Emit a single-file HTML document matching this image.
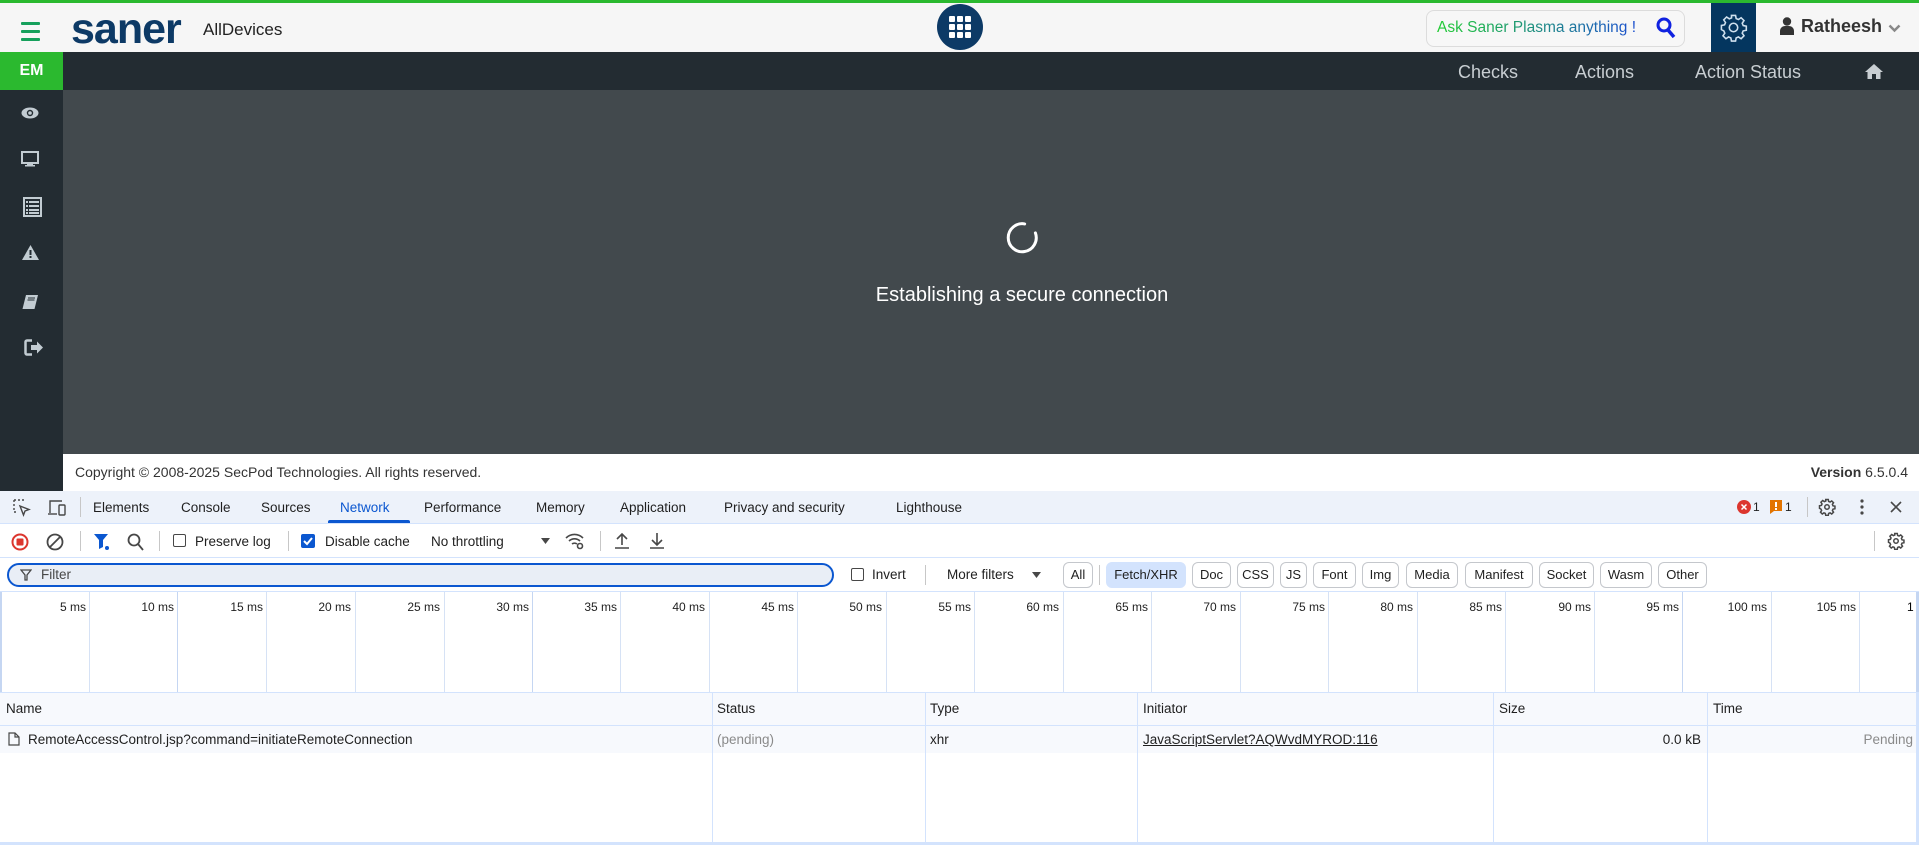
<!DOCTYPE html>
<html><head><meta charset="utf-8"><style>
*{box-sizing:border-box;margin:0;padding:0}
body{width:1919px;height:845px;overflow:hidden;font-family:"Liberation Sans",Arial,sans-serif;background:#fff;position:relative}
.a{position:absolute}
.dt{font-family:"Liberation Sans",Arial,sans-serif;font-size:13.5px;color:#1f1f1f}
.chip{position:absolute;top:562px;height:26px;border:1px solid #c4c7cc;border-radius:6px;font-size:13px;line-height:24px;text-align:center;color:#1f1f1f}
.tick{position:absolute;top:592px;height:100px;border-left:1px solid #d6e2f5}
.tl{position:absolute;top:600px;font-size:12px;color:#1f1f1f;text-align:right;width:80px}
</style></head><body>
<div class="a" style="left:0;top:0;width:1919px;height:3px;background:#2bb92f"></div>
<div class="a" style="left:0;top:3px;width:1919px;height:49px;background:#f6f6f6"></div>
<div class="a" style="left:21px;top:22px;width:19px;height:3px;background:#16a05c;border-radius:1px"></div>
<div class="a" style="left:21px;top:30px;width:19px;height:3px;background:#16a05c;border-radius:1px"></div>
<div class="a" style="left:21px;top:38px;width:19px;height:3px;background:#16a05c;border-radius:1px"></div>
<div class="a" style="left:71px;top:3px;font-size:43px;font-weight:bold;color:#0d3a66;letter-spacing:-1px;line-height:52px">saner</div>
<div class="a" style="left:203px;top:20px;font-size:17px;color:#222">AllDevices</div>
<div class="a" style="left:937px;top:4px;width:46px;height:46px;border-radius:50%;background:#0d3a66"></div>
<svg class="a" style="left:949px;top:16px" width="22" height="22" viewBox="0 0 22 22" fill="#fff"><rect x="0" y="0" width="6" height="6" rx="1"/><rect x="8" y="0" width="6" height="6" rx="1"/><rect x="16" y="0" width="6" height="6" rx="1"/><rect x="0" y="8" width="6" height="6" rx="1"/><rect x="8" y="8" width="6" height="6" rx="1"/><rect x="16" y="8" width="6" height="6" rx="1"/><rect x="0" y="16" width="6" height="6" rx="1"/><rect x="8" y="16" width="6" height="6" rx="1"/><rect x="16" y="16" width="6" height="6" rx="1"/></svg>
<div class="a" style="left:1426px;top:10px;width:259px;height:37px;border:1px solid #dcdcdc;border-radius:8px;background:#f7f7f7"></div>
<div class="a" style="left:1437px;top:19px;font-size:15.5px;white-space:nowrap;background:linear-gradient(90deg,#22cc33,#1b4fd0);-webkit-background-clip:text;background-clip:text;color:transparent">Ask Saner Plasma anything !</div>
<svg class="a" style="left:1656px;top:17px" width="20" height="22" viewBox="0 0 20 22"><circle cx="8" cy="8" r="6" fill="none" stroke="#1022e0" stroke-width="3"/><line x1="12" y1="13" x2="18" y2="20" stroke="#1022e0" stroke-width="3.5"/></svg>
<div class="a" style="left:1711px;top:3px;width:45px;height:49px;background:#04365f"></div>
<svg class="a" style="left:1719px;top:13px" width="29" height="29" viewBox="0 0 24 24" fill="none" stroke="#cfe0ee" stroke-width="1.3"><circle cx="12" cy="12" r="3.5"/><path d="M10.3 2h3.4l.5 2.6 1.9.8 2.2-1.5 2.4 2.4-1.5 2.2.8 1.9 2.6.5v3.4l-2.6.5-.8 1.9 1.5 2.2-2.4 2.4-2.2-1.5-1.9.8-.5 2.6h-3.4l-.5-2.6-1.9-.8-2.2 1.5-2.4-2.4 1.5-2.2-.8-1.9L2 13.7v-3.4l2.6-.5.8-1.9-1.5-2.2 2.4-2.4 2.2 1.5 1.9-.8z"/></svg>
<svg class="a" style="left:1780px;top:17px" width="14" height="18" viewBox="0 0 14 18" fill="#333"><circle cx="7" cy="4.5" r="4.2"/><path d="M0 18v-4c0-3 2.5-5 5-5h4c2.5 0 5 2 5 5v4z"/></svg>
<div class="a" style="left:1801px;top:16px;font-size:18px;font-weight:bold;color:#333">Ratheesh</div>
<svg class="a" style="left:1888px;top:24px" width="13" height="9" viewBox="0 0 13 9"><path d="M1.5 1.5l5 5 5-5" stroke="#888" stroke-width="2.5" fill="none"/></svg>
<div class="a" style="left:0;top:52px;width:1919px;height:38px;background:#232c32"></div>
<div class="a" style="left:0;top:90px;width:63px;height:401px;background:#232c32"></div>
<div class="a" style="left:0;top:52px;width:63px;height:38px;background:#2bb92f;color:#fff;font-weight:bold;font-size:16px;text-align:center;line-height:38px">EM</div>
<div class="a" style="left:1458px;top:62px;font-size:18px;color:#c8ced2">Checks</div>
<div class="a" style="left:1575px;top:62px;font-size:18px;color:#c8ced2">Actions</div>
<div class="a" style="left:1695px;top:62px;font-size:18px;color:#c8ced2">Action Status</div>
<svg class="a" style="left:1865px;top:64px" width="18" height="15" viewBox="0 0 18 15" fill="#c8ced2"><path d="M9 0L0 8h2.5v7h4.5v-5h4v5h4.5V8H18z"/></svg>
<svg class="a" style="left:21px;top:107px" width="18" height="12" viewBox="0 0 18 12"><ellipse cx="9" cy="6" rx="8.5" ry="5.5" fill="#c2ccd2"/><circle cx="9" cy="6" r="3.2" fill="#232c32"/><circle cx="9" cy="6" r="1.8" fill="#c2ccd2"/></svg>
<svg class="a" style="left:21px;top:151px" width="18" height="16" viewBox="0 0 18 16"><rect x="1" y="1" width="16" height="11" fill="none" stroke="#c2ccd2" stroke-width="2"/><rect x="6" y="12" width="6" height="2" fill="#c2ccd2"/><rect x="4" y="14" width="10" height="1.5" fill="#c2ccd2"/></svg>
<svg class="a" style="left:23px;top:197px" width="19" height="20" viewBox="0 0 19 20" fill="#c2ccd2"><rect x="0" y="0" width="19" height="20"/><rect x="2" y="2" width="15" height="16" fill="#232c32"/><rect x="3" y="4" width="2" height="2"/><rect x="6" y="4" width="10" height="2"/><rect x="3" y="8" width="2" height="2"/><rect x="6" y="8" width="10" height="2"/><rect x="3" y="12" width="2" height="2"/><rect x="6" y="12" width="10" height="2"/><rect x="3" y="15" width="2" height="2"/><rect x="6" y="15" width="10" height="2"/></svg>
<svg class="a" style="left:22px;top:245px" width="17" height="15" viewBox="0 0 17 15"><path d="M8.5 0L17 15H0z" fill="#c2ccd2"/><rect x="7.5" y="5" width="2" height="5" fill="#232c32"/><rect x="7.5" y="11" width="2" height="2" fill="#232c32"/></svg>
<svg class="a" style="left:22px;top:295px" width="16" height="15" viewBox="0 0 16 15"><path d="M4 0h12l-3 12H1z" fill="#c2ccd2"/><path d="M1 12h12l-.5 2H.5z" fill="#c2ccd2"/><path d="M6 3h7M5.5 5h7" stroke="#232c32"/></svg>
<svg class="a" style="left:24px;top:339px" width="20" height="17" viewBox="0 0 20 17"><path d="M8 1.5H3a1.5 1.5 0 0 0-1.5 1.5v11A1.5 1.5 0 0 0 3 15.5h5" stroke="#c2ccd2" stroke-width="2.5" fill="none"/><path d="M7 6h6V2.5l6 6-6 6V11H7z" fill="#c2ccd2"/></svg>
<div class="a" style="left:63px;top:90px;width:1856px;height:364px;background:#42494d"></div>
<svg class="a" style="left:1004px;top:220px" width="36" height="36" viewBox="0 0 36 36"><path d="M25 5.5A14 14 0 1 1 11 5.5" stroke="#fff" stroke-width="3" fill="none" stroke-linecap="round" transform="rotate(40 18 18)"/></svg>
<div class="a" style="left:0;top:284px;width:1918px;text-align:center;font-size:20px;color:#fff;padding-left:126px">Establishing a secure connection</div>
<div class="a" style="left:63px;top:454px;width:1856px;height:37px;background:#fff"></div>
<div class="a" style="left:75px;top:464px;font-size:14px;color:#333">Copyright © 2008-2025 SecPod Technologies. All rights reserved.</div>
<div class="a" style="right:11px;top:464px;font-size:14px;color:#333"><b>Version</b> 6.5.0.4</div>
<div class="a" style="left:0;top:491px;width:1919px;height:33px;background:#edf2fa;border-bottom:1px solid #d3e3fd"></div>
<svg class="a" style="left:13px;top:499px" width="18" height="18" viewBox="0 0 18 18" fill="none" stroke="#474747" stroke-width="1.4"><path d="M1 1h2M5 1h2M9 1h2M1 1v2M1 5v2M1 9v2M1 13h2" /><path d="M7 7l9 3.5-4 1.5-1.5 4z"/></svg>
<svg class="a" style="left:47px;top:499px" width="20" height="18" viewBox="0 0 20 18" fill="none" stroke="#474747" stroke-width="1.4"><path d="M3 14V2h12"/><path d="M1 15h9"/><rect x="12" y="6" width="6" height="10" rx="1"/></svg>
<div class="a" style="left:80px;top:497px;width:1px;height:20px;background:#c7c7c7"></div>
<div class="a dt" style="left:93px;top:500px">Elements</div>
<div class="a dt" style="left:181px;top:500px">Console</div>
<div class="a dt" style="left:261px;top:500px">Sources</div>
<div class="a dt" style="left:340px;top:500px;color:#0b57d0">Network</div>
<div class="a" style="left:328px;top:520px;width:82px;height:3px;background:#0b57d0;border-radius:2px 2px 0 0"></div>
<div class="a dt" style="left:424px;top:500px">Performance</div>
<div class="a dt" style="left:536px;top:500px">Memory</div>
<div class="a dt" style="left:620px;top:500px">Application</div>
<div class="a dt" style="left:724px;top:500px">Privacy and security</div>
<div class="a dt" style="left:896px;top:500px">Lighthouse</div>
<svg class="a" style="left:1737px;top:500px" width="14" height="14"><circle cx="7" cy="7" r="7" fill="#dc362e"/><path d="M4.5 4.5l5 5M9.5 4.5l-5 5" stroke="#fff" stroke-width="1.5"/></svg>
<div class="a dt" style="left:1753px;top:500px;font-size:12px">1</div>
<svg class="a" style="left:1770px;top:500px" width="12" height="14"><path d="M0 0h12v11H4l-4 3z" fill="#e37400"/><rect x="5" y="2" width="2" height="5" fill="#fff"/><rect x="5" y="8" width="2" height="2" fill="#fff"/></svg>
<div class="a dt" style="left:1785px;top:500px;font-size:12px">1</div>
<div class="a" style="left:1807px;top:497px;width:1px;height:20px;background:#c7c7c7"></div>
<svg class="a" style="left:1818px;top:498px" width="18" height="18" viewBox="0 0 24 24" fill="none" stroke="#474747" stroke-width="2"><circle cx="12" cy="12" r="3"/><path d="M10.3 2h3.4l.5 2.6 1.9.8 2.2-1.5 2.4 2.4-1.5 2.2.8 1.9 2.6.5v3.4l-2.6.5-.8 1.9 1.5 2.2-2.4 2.4-2.2-1.5-1.9.8-.5 2.6h-3.4l-.5-2.6-1.9-.8-2.2 1.5-2.4-2.4 1.5-2.2-.8-1.9L2 13.7v-3.4l2.6-.5.8-1.9-1.5-2.2 2.4-2.4 2.2 1.5 1.9-.8z"/></svg>
<svg class="a" style="left:1859px;top:499px" width="6" height="16"><circle cx="3" cy="2" r="1.6" fill="#474747"/><circle cx="3" cy="8" r="1.6" fill="#474747"/><circle cx="3" cy="14" r="1.6" fill="#474747"/></svg>
<svg class="a" style="left:1890px;top:501px" width="12" height="12"><path d="M1 1l10 10M11 1L1 11" stroke="#474747" stroke-width="1.6"/></svg>
<div class="a" style="left:0;top:524px;width:1919px;height:34px;background:#fff;border-bottom:1px solid #d3e3fd"></div>
<svg class="a" style="left:11px;top:533px" width="18" height="18"><circle cx="9" cy="9" r="7.5" fill="none" stroke="#dc362e" stroke-width="2"/><rect x="5.5" y="5.5" width="7" height="7" rx="1" fill="#dc362e"/></svg>
<svg class="a" style="left:46px;top:533px" width="18" height="18" fill="none" stroke="#474747" stroke-width="1.8"><circle cx="9" cy="9" r="7.5"/><path d="M4 14L14 4"/></svg>
<div class="a" style="left:80px;top:531px;width:1px;height:20px;background:#c7c7c7"></div>
<svg class="a" style="left:94px;top:533px" width="16" height="18"><path d="M0 1h14l-5 6v7l-4 2V7z" fill="#0b57d0"/><circle cx="13" cy="15" r="2" fill="#0b57d0"/></svg>
<svg class="a" style="left:127px;top:533px" width="17" height="18" fill="none" stroke="#474747" stroke-width="1.8"><circle cx="7" cy="7" r="5.5"/><path d="M11 11l5 6"/></svg>
<div class="a" style="left:159px;top:531px;width:1px;height:20px;background:#c7c7c7"></div>
<div class="a" style="left:173px;top:534px;width:13px;height:13px;border:1px solid #474747;border-radius:2px"></div>
<div class="a dt" style="left:195px;top:534px">Preserve log</div>
<div class="a" style="left:288px;top:531px;width:1px;height:20px;background:#c7c7c7"></div>
<div class="a" style="left:301px;top:534px;width:14px;height:14px;background:#0b57d0;border-radius:2px"></div>
<svg class="a" style="left:302px;top:535px" width="12" height="12"><path d="M2 6l3 3 5-6" stroke="#fff" stroke-width="2" fill="none"/></svg>
<div class="a dt" style="left:325px;top:534px">Disable cache</div>
<div class="a dt" style="left:431px;top:534px">No throttling</div>
<svg class="a" style="left:541px;top:538px" width="9" height="6"><path d="M0 0h9L4.5 6z" fill="#474747"/></svg>
<svg class="a" style="left:565px;top:532px" width="20" height="18" fill="none" stroke="#474747" stroke-width="1.6"><path d="M1 6a12 12 0 0 1 17 0M4 9a8 8 0 0 1 11 0M7 12a4 4 0 0 1 5 0"/><circle cx="15" cy="14" r="2.5"/></svg>
<div class="a" style="left:600px;top:531px;width:1px;height:20px;background:#c7c7c7"></div>
<svg class="a" style="left:614px;top:532px" width="16" height="18" fill="none" stroke="#474747" stroke-width="1.6"><path d="M8 13V2M3 7l5-5 5 5M1 16h14"/></svg>
<svg class="a" style="left:649px;top:532px" width="16" height="18" fill="none" stroke="#474747" stroke-width="1.6"><path d="M8 1v12M3 8l5 5 5-5M1 16h14"/></svg>
<div class="a" style="left:1874px;top:531px;width:1px;height:20px;background:#c7c7c7"></div>
<svg class="a" style="left:1887px;top:532px" width="18" height="18" viewBox="0 0 24 24" fill="none" stroke="#474747" stroke-width="2"><circle cx="12" cy="12" r="3"/><path d="M10.3 2h3.4l.5 2.6 1.9.8 2.2-1.5 2.4 2.4-1.5 2.2.8 1.9 2.6.5v3.4l-2.6.5-.8 1.9 1.5 2.2-2.4 2.4-2.2-1.5-1.9.8-.5 2.6h-3.4l-.5-2.6-1.9-.8-2.2 1.5-2.4-2.4 1.5-2.2-.8-1.9L2 13.7v-3.4l2.6-.5.8-1.9-1.5-2.2 2.4-2.4 2.2 1.5 1.9-.8z"/></svg>
<div class="a" style="left:0;top:558px;width:1919px;height:34px;background:#fff;border-bottom:1px solid #d3e3fd"></div>
<div class="a" style="left:7px;top:563px;width:827px;height:24px;border:2px solid #0b57d0;border-radius:12px;background:#e9eef6"></div>
<svg class="a" style="left:20px;top:569px" width="12" height="12" fill="none" stroke="#474747" stroke-width="1.3"><path d="M1 1h10L7 6v5H5V6z"/></svg>
<div class="a dt" style="left:41px;top:567px;color:#474747">Filter</div>
<div class="a" style="left:851px;top:568px;width:13px;height:13px;border:1px solid #474747;border-radius:2px"></div>
<div class="a dt" style="left:872px;top:567px">Invert</div>
<div class="a" style="left:925px;top:565px;width:1px;height:20px;background:#c7c7c7"></div>
<div class="a dt" style="left:947px;top:567px">More filters</div>
<svg class="a" style="left:1032px;top:572px" width="9" height="6"><path d="M0 0h9L4.5 6z" fill="#474747"/></svg>
<div class="chip" style="left:1063px;width:30px">All</div>
<div class="a" style="left:1099px;top:565px;width:1px;height:20px;background:#c7c7c7"></div>
<div class="chip" style="left:1106px;width:80px;background:#d3e3fd;border-color:#d3e3fd">Fetch/XHR</div>
<div class="chip" style="left:1192px;width:39px">Doc</div>
<div class="chip" style="left:1237px;width:37px">CSS</div>
<div class="chip" style="left:1280px;width:27px">JS</div>
<div class="chip" style="left:1313px;width:43px">Font</div>
<div class="chip" style="left:1362px;width:37px">Img</div>
<div class="chip" style="left:1406px;width:52px">Media</div>
<div class="chip" style="left:1465px;width:68px">Manifest</div>
<div class="chip" style="left:1539px;width:55px">Socket</div>
<div class="chip" style="left:1600px;width:52px">Wasm</div>
<div class="chip" style="left:1658px;width:49px">Other</div>
<div class="tick" style="left:0;border-left:2px solid #c5d6f2"></div>
<div class="tick" style="left:89px"></div><div class="tick" style="left:177px;border-color:#c5d6f2"></div>
<div class="tick" style="left:266px"></div><div class="tick" style="left:355px"></div><div class="tick" style="left:444px"></div>
<div class="tick" style="left:532px;border-color:#c5d6f2"></div><div class="tick" style="left:620px"></div><div class="tick" style="left:709px"></div>
<div class="tick" style="left:797px"></div><div class="tick" style="left:886px"></div><div class="tick" style="left:974px"></div>
<div class="tick" style="left:1063px"></div><div class="tick" style="left:1151px"></div><div class="tick" style="left:1240px"></div>
<div class="tick" style="left:1328px"></div><div class="tick" style="left:1417px"></div><div class="tick" style="left:1505px"></div>
<div class="tick" style="left:1594px"></div><div class="tick" style="left:1682px;border-color:#c5d6f2"></div><div class="tick" style="left:1771px"></div><div class="tick" style="left:1859px"></div>
<div class="tick" style="left:1916px;border-left:3px solid #c5d6f2"></div>
<div class="tl" style="left:6px">5 ms</div><div class="tl" style="left:94px">10 ms</div><div class="tl" style="left:183px">15 ms</div>
<div class="tl" style="left:271px">20 ms</div><div class="tl" style="left:360px">25 ms</div><div class="tl" style="left:449px">30 ms</div>
<div class="tl" style="left:537px">35 ms</div><div class="tl" style="left:625px">40 ms</div><div class="tl" style="left:714px">45 ms</div>
<div class="tl" style="left:802px">50 ms</div><div class="tl" style="left:891px">55 ms</div><div class="tl" style="left:979px">60 ms</div>
<div class="tl" style="left:1068px">65 ms</div><div class="tl" style="left:1156px">70 ms</div><div class="tl" style="left:1245px">75 ms</div>
<div class="tl" style="left:1333px">80 ms</div><div class="tl" style="left:1422px">85 ms</div><div class="tl" style="left:1511px">90 ms</div>
<div class="tl" style="left:1599px">95 ms</div><div class="tl" style="left:1687px">100 ms</div><div class="tl" style="left:1776px">105 ms</div>
<div class="a" style="left:1907px;top:600px;font-size:12px">1</div>
<div class="a" style="left:0;top:692px;width:1919px;height:34px;background:#f7f9fd;border-top:1px solid #d3e3fd;border-bottom:1px solid #d3e3fd"></div>
<div class="a" style="left:0;top:726px;width:1919px;height:27px;background:#f7f9fd"></div>
<div class="a" style="left:712px;top:692px;width:1px;height:153px;background:#d3e3fd"></div>
<div class="a" style="left:925px;top:692px;width:1px;height:153px;background:#d3e3fd"></div>
<div class="a" style="left:1137px;top:692px;width:1px;height:153px;background:#d3e3fd"></div>
<div class="a" style="left:1493px;top:692px;width:1px;height:153px;background:#d3e3fd"></div>
<div class="a" style="left:1707px;top:692px;width:1px;height:153px;background:#d3e3fd"></div>
<div class="a" style="left:1916px;top:692px;width:3px;height:153px;background:#d3e3fd"></div>
<div class="a" style="left:0;top:842px;width:1919px;height:3px;background:#d3e3fd"></div>
<div class="a dt" style="left:6px;top:701px">Name</div>
<div class="a dt" style="left:717px;top:701px">Status</div>
<div class="a dt" style="left:930px;top:701px">Type</div>
<div class="a dt" style="left:1143px;top:701px">Initiator</div>
<div class="a dt" style="left:1499px;top:701px">Size</div>
<div class="a dt" style="left:1713px;top:701px">Time</div>
<svg class="a" style="left:8px;top:732px" width="12" height="14" fill="none" stroke="#474747" stroke-width="1.2"><path d="M1 1h6l4 4v8H1z"/><path d="M7 1v4h4"/></svg>
<div class="a dt" style="left:28px;top:732px">RemoteAccessControl.jsp?command=initiateRemoteConnection</div>
<div class="a dt" style="left:717px;top:732px;color:#8a8a8a">(pending)</div>
<div class="a dt" style="left:930px;top:732px">xhr</div>
<div class="a dt" style="left:1143px;top:732px;text-decoration:underline">JavaScriptServlet?AQWvdMYROD:116</div>
<div class="a dt" style="left:1600px;top:732px;width:101px;text-align:right">0.0 kB</div>
<div class="a dt" style="left:1800px;top:732px;width:113px;text-align:right;color:#8a8a8a">Pending</div>
</body></html>
